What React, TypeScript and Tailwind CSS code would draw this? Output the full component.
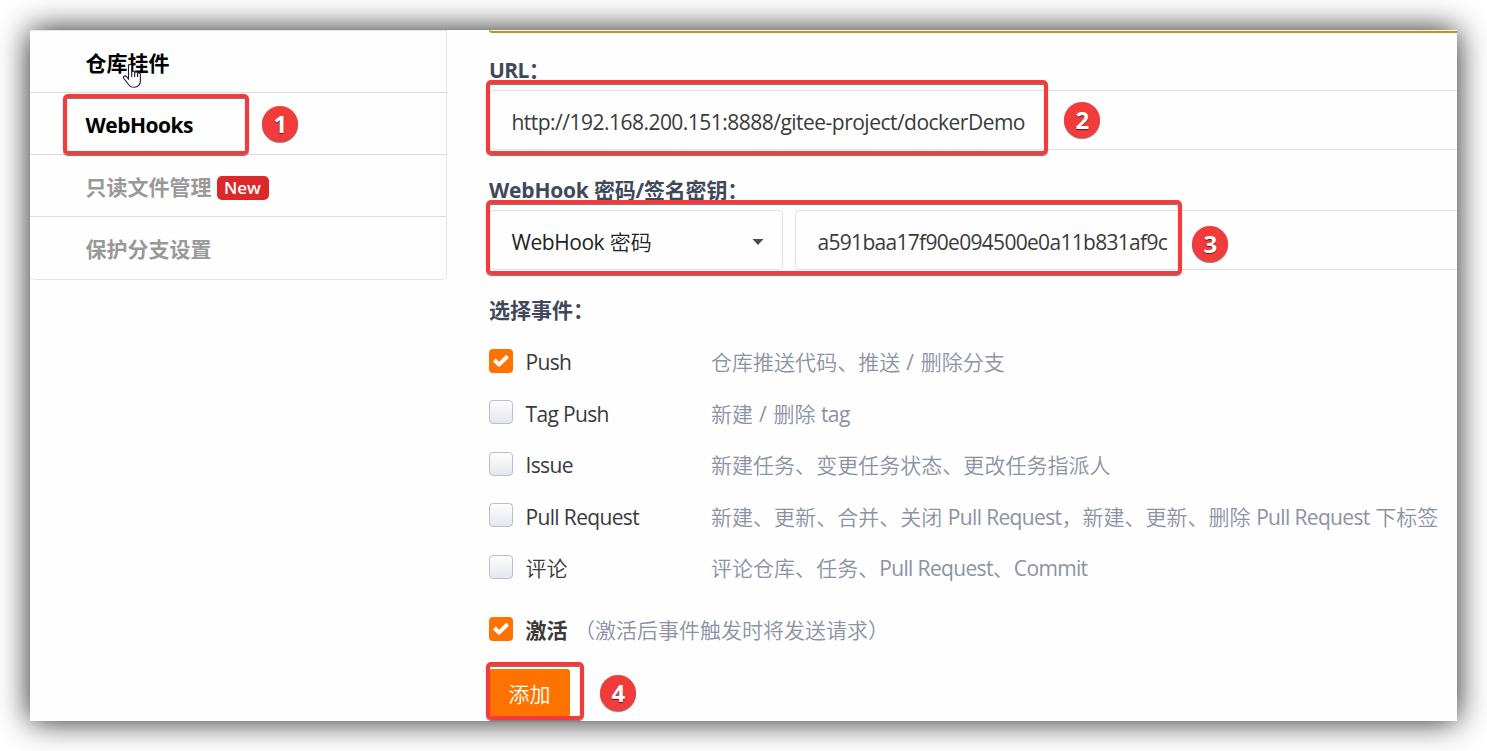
import type { ReactNode } from "react";

function Checkbox({ checked }: { checked?: boolean }) {
  if (checked) {
    return (
      <span className="flex h-6 w-6 shrink-0 items-center justify-center rounded-[4px] bg-[#fe7300]">
        <svg width="18" height="14" viewBox="0 0 18 14" fill="none" stroke="#fff" strokeWidth="4">
          <path d="M2.4 6 7 10.6 15.6 2.2" strokeLinejoin="round" />
        </svg>
      </span>
    );
  }
  return (
    <span className="h-6 w-6 shrink-0 rounded-[4px] border border-[#bcbec8] bg-linear-to-b from-[#fdfdfe] to-[#e6e7ee]" />
  );
}

const events = [
  { name: "Push", desc: "仓库推送代码、推送 / 删除分支", checked: true },
  { name: "Tag Push", desc: "新建 / 删除 tag" },
  { name: "Issue", desc: "新建任务、变更任务状态、更改任务指派人" },
  { name: "Pull Request", desc: "新建、更新、合并、关闭 Pull Request，新建、更新、删除 Pull Request 下标签" },
  { name: "评论", desc: "评论仓库、任务、Pull Request、Commit" },
];

/* Latin runs are set tighter and in a regular weight; Chinese runs stay light. */
function Mixed({ text }: { text: string }) {
  return (
    <>
      {text.split(/([A-Za-z][A-Za-z ]*[A-Za-z]| \/ )/).map((run, i) => {
        if (i % 2 === 0) {
          return (
            <span key={i} className="tracking-[0.03px]">
              {run}
            </span>
          );
        }
        return (
          <span key={i} className={run === " / " ? "font-normal tracking-[0.6px]" : "font-normal tracking-[-0.65px]"}>
            {run}
          </span>
        );
      })}
    </>
  );
}

function Item({ children, className }: { children: ReactNode; className: string }) {
  return (
    <li className={"flex h-[62px] items-center border-b border-[#dcdcde] pt-[3px] pl-[55.5px] font-semibold " + className}>
      {children}
    </li>
  );
}

function Frame({ className }: { className: string }) {
  return (
    <div
      className={
        "absolute rounded-[5px] border-4 border-[#f23c3c] shadow-[0_1px_1px_rgba(0,0,0,0.55),inset_0_1px_1px_rgba(0,0,0,0.55)] " +
        className
      }
    />
  );
}

function Marker({ n, className }: { n: number; className: string }) {
  return (
    <div
      className={
        "absolute flex h-9 w-9 items-center justify-center rounded-full bg-[#f23c3c] font-['Open_Sans',sans-serif] text-[24px] leading-none font-bold text-white shadow-[0_1px_1px_rgba(0,0,0,0.5)] [text-shadow:0_1px_1px_rgba(0,0,0,0.6)] " +
        className
      }
    >
      {n}
    </div>
  );
}

export default function App() {
  return (
    <div className="h-[751px] w-[1487px] overflow-hidden bg-white p-[30px] font-['Open_Sans','Noto_Sans_CJK_SC',sans-serif] text-[21px] leading-[30px]">
      <div className="relative h-[691px] w-[1427px] bg-[#fefefe] shadow-[0_0_30px_rgba(0,0,0,0.88)]">
        <div className="flex h-full overflow-hidden">
          <aside className="w-[417px] shrink-0">
            <ul className="h-[250px] rounded-b-[5px] border-t border-r border-b border-[#e3e5e8]">
              <Item className="text-black">仓库挂件</Item>
              <Item className="text-black">
                <span className="font-bold tracking-[-0.5px]">WebHooks</span>
              </Item>
              <Item className="text-[#999]">
                <span>只读文件管理</span>
                <span className="mt-px ml-[5px] flex h-6 w-[52px] items-center justify-center rounded-[5px] bg-[#db2828] pt-px text-[17px] text-white">
                  New
                </span>
              </Item>
              <li className="flex h-[62px] items-center pt-[1px] pl-[55.5px] font-semibold text-[#999]">保护分支设置</li>
            </ul>
          </aside>

          <main className="ml-[42px] w-[980px] shrink-0 text-[#3a3a3a]">
            <div className="h-[3px] w-full rounded-bl-[5px] border-b-2 border-l border-[#c0902a] bg-[#fff8e0]" />
            <div className="mt-[22px] h-[35px] font-bold tracking-[-0.6px] text-[#40485b]">URL：</div>
            <div className="flex h-[60px] items-center rounded-[4px] border border-[#dfe0e8] pt-[3px] pl-[21.5px]">
              <span className="font-normal tracking-[-0.52px] whitespace-nowrap">
                http://192.168.200.151:8888/gitee-project/dockerDemo
              </span>
            </div>
            <div className="mt-[25px] h-[35px] font-bold tracking-[-0.2px] whitespace-nowrap text-[#40485b]">
              WebHook 密码/签名密钥：
            </div>
            <div className="flex gap-3">
              <div className="flex h-[60px] w-[294px] shrink-0 items-center justify-between rounded-[4px] border border-[#dfe0e8] pt-[3px] pr-[18px] pl-[21.5px] font-[350] text-[#222]">
                <span>
                  <span className="font-normal tracking-[-0.45px]">WebHook</span> 密码
                </span>
                <svg width="12" height="6" viewBox="0 0 12 6" fill="#4c4c4c">
                  <path d="M0.5 0h11L6 6z" />
                </svg>
              </div>
              <div className="flex h-[60px] flex-1 items-center rounded-[4px] border border-[#dfe0e8] pt-[3px] pl-[21.5px] tracking-[-0.7px]">
                a591baa17f90e094500e0a11b831af9c
              </div>
            </div>
            <div className="mt-[25px] font-bold text-[#40485b]">选择事件：</div>
            <div className="mt-[10px] font-[350]">
              {events.map((e) => (
                <div key={e.name} className="flex h-[51.5px] items-center">
                  <Checkbox checked={e.checked} />
                  <span className="ml-[12.5px] w-[185.5px] shrink-0 pt-[3px]">
                    <Mixed text={e.name} />
                  </span>
                  <span className="pt-[3px] whitespace-nowrap text-[#8c92a4]">
                    <Mixed text={e.desc} />
                  </span>
                </div>
              ))}
            </div>
            <div className="mt-[10px] flex h-[52px] items-center">
              <Checkbox checked />
              <span className="ml-[12.5px] pt-[3px] font-bold">激活</span>
              <span className="ml-[6.5px] pt-[3px] font-[350] text-[#8c92a4]">（激活后事件触发时将发送请求）</span>
            </div>
            <button className="mt-[14px] flex h-12 w-[81px] items-center justify-center rounded-[3px] bg-[#fe7300] pt-0.5 font-[350] text-white">
              添加
            </button>
          </main>
        </div>

        <svg className="absolute top-[33px] left-[92px]" width="20" height="26" viewBox="0 0 20 26">
          <path
            d="M6.5 16V3.2C6.5 0.9 9.7 0.9 9.7 3.2V9C10.3 7.8 12.5 8 12.7 9.5 13.5 8.5 15.4 8.8 15.6 10.2 16.8 9.3 18.4 10 18.4 11.5V18C18.4 21.5 16 24.3 12.5 24.3 8.5 24.3 7.5 23 5.8 20.5L1.7 15.3C0.5 13.4 3 12 4.5 13.7Z"
            fill="#fff"
            stroke="#1c1c2c"
            strokeWidth="1.1"
          />
          <path d="M9.7 9v5M12.7 9.5V14M15.6 10.2V14" stroke="#1c1c2c" strokeWidth="1.1" />
        </svg>

        <Frame className="top-[64px] left-[33px] h-[61px] w-[186px]" />
        <Frame className="top-[50px] left-[456px] h-[75px] w-[562px]" />
        <Frame className="top-[170px] left-[456px] h-[75px] w-[696px]" />
        <Frame className="top-[632px] left-[456px] h-[58px] w-[98px]" />
        <Marker n={1} className="top-[76px] left-[232.4px]" />
        <Marker n={2} className="top-[72px] left-[1034.4px]" />
        <Marker n={3} className="top-[196px] left-[1162.4px]" />
        <Marker n={4} className="top-[645px] left-[570.4px]" />
      </div>
    </div>
  );
}
